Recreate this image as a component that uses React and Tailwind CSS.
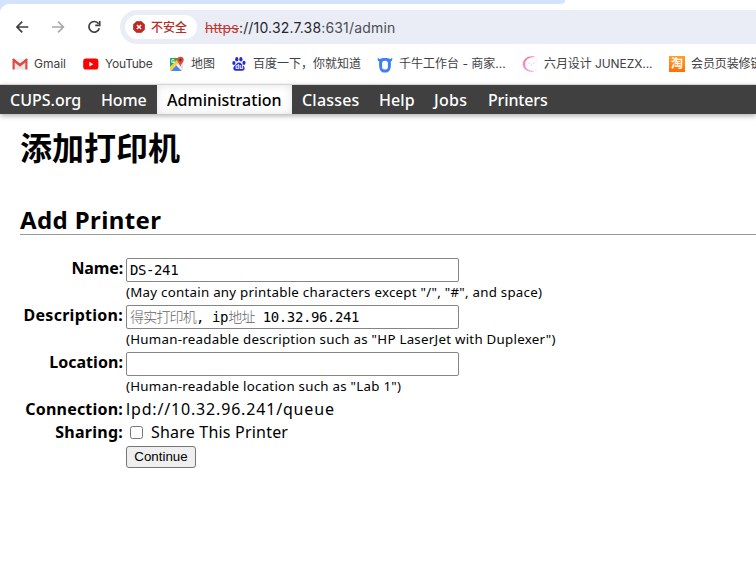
import React from "react";

const cjk = "font-['Inter','Noto_Sans_CJK_SC',sans-serif]";

function GmailIcon() {
  return (
    <svg width="16" height="16" viewBox="0 0 16 16">
      <path d="M1.2 3h13.6v10.5H1.2z" fill="#e8e6e6" />
      <path d="M0.5 3.2 8 9l7.5-5.8v10.3h-2.2V6.6L8 10.8 2.7 6.6v6.9H.5z" fill="#df4d42" />
      <path d="M.5 3.8C.5 2.6 1.6 2.2 2.5 2.9L8 7.2l5.5-4.3c.9-.7 2-.3 2 .9L8 9.4z" fill="#d9453b" />
      <path d="M2.7 3.2h10.6L8 7.2z" fill="#f4f2f2" />
    </svg>
  );
}

function YouTubeIcon() {
  return (
    <svg width="16" height="16" viewBox="0 0 16 16">
      <rect x="0.2" y="2.6" width="15.2" height="11" rx="2.8" fill="#f00" />
      <path d="M6.3 5.8v4.8l4-2.4z" fill="#fff" />
    </svg>
  );
}

function MapsIcon() {
  return (
    <svg width="16" height="16" viewBox="0 0 16 16">
      <rect x="1" y="2" width="13" height="13" rx="1.2" fill="#dfe3e8" />
      <path d="M2 2h8L1 11V3a1 1 0 0 1 1-1z" fill="#2da455" />
      <path d="M1 11.5 10.5 2l2 1.5L1.8 15 1 14z" fill="#fbcd32" />
      <path d="M2 15l5.2-5.4L12.5 15z" fill="#4386f5" />
      <path d="M8 8.6l6 6" stroke="#fff" strokeWidth="1" />
      <text x="2.1" y="7.2" fontSize="5.5" fontWeight="700" fill="#fff" fontFamily="Roboto">G</text>
      <path d="M11.4 0.7a3.3 3.3 0 0 1 3.3 3.3c0 2.4-2.6 3.2-3.1 6.5h-.4C10.700 7.200 8.100 6.400 8.100 4A3.300 3.300 0 0 1 11.400.7z" fill="#de4b3d" />
      <circle cx="11.400" cy="4" r="1.200" fill="#7d2720" />
    </svg>
  );
}

function BaiduIcon() {
  return (
    <svg width="14" height="16" viewBox="0 0 14 16" fill="#2529d8">
      <ellipse cx="1.900" cy="7" rx="1.600" ry="2.100" />
      <ellipse cx="4.800" cy="3.300" rx="1.600" ry="2.200" />
      <ellipse cx="8.900" cy="3.300" rx="1.600" ry="2.200" />
      <ellipse cx="12" cy="6.800" rx="1.600" ry="2.100" />
      <path d="M7 6.400c1.900 0 2.500 1.700 4.100 3 1.300 1.100 1.900 2.400 1.400 3.800-.6 1.700-2.200 1.700-5.500 1.600-3.300.1-4.900.1-5.500-1.600-.5-1.400.1-2.700 1.400-3.800C4.500 8.100 5.100 6.400 7 6.400z" />
      <text x="3.300" y="13.400" fontSize="6.500" fontWeight="700" fill="#fff" fontFamily="Liberation Sans">du</text>
    </svg>
  );
}

function QianniuIcon() {
  return (
    <svg width="16" height="17" viewBox="0 0 16 17">
      <path d="M1 1c0 1.200.6 1.800 1.800 1.900C4.200 2.200 6 2 8 2s3.800.2 5.200.9C14.400 2.800 15 2.200 15 1c.7 2.600.3 4.100-1.300 4.800.3 1.100.3 2.200.2 3.400-.2 4.700-1.900 7.400-5.900 7.400s-5.700-2.700-5.900-7.400c-.1-1.200-.1-2.300.2-3.400C.7 5.100.3 3.600 1 1z" fill="#3d7ff5" />
      <rect x="5.100" y="4.800" width="5.800" height="8.800" rx="2.500" fill="#fff" />
    </svg>
  );
}

function MoonIcon() {
  return (
    <svg width="16" height="16" viewBox="0 0 16 16">
      <defs>
        <linearGradient id="moon" x1="0" y1="0" x2="0" y2="1">
          <stop offset="0" stopColor="#f4738f" />
          <stop offset="1" stopColor="#f3a5f0" />
        </linearGradient>
      </defs>
      <path d="M12.500.7C5.800-.5.900 3.200.9 8.200c0 4.700 4.700 8.500 11.200 7.200C6.400 15 3 12.300 3 8.100 3 4 6.500 1.100 12.500.7z" fill="url(#moon)" stroke="url(#moon)" strokeWidth=".3" />
      <path d="M12.800 1.400c1 .8 1.700 1.800 2 3M12.800 14.600c.9-.7 1.500-1.500 1.900-2.400" stroke="#f8d5ea" strokeWidth=".7" fill="none" />
      <path d="M6.500 7.200h1.600M10.800 7.200h1.600M8.800 9h1.200" stroke="#f3b6d5" strokeWidth=".8" />
    </svg>
  );
}

function Bookmark({ icon, className, children }) {
  return (
    <div className={`flex items-center whitespace-nowrap shrink-0 ${className}`}>
      {icon}
      {children}
    </div>
  );
}

function Browser() {
  return (
    <header className={`h-[84px] shrink-0 bg-white text-[#3f4144] ${cjk}`}>
      <div className="h-1 w-[565px] rounded-br-lg bg-[#d3e3fd]" />
      <div className="relative flex h-[46px] items-center">
        <svg className="absolute left-0 top-0" width="9" height="9" viewBox="0 0 9 9">
          <path d="M0 0h9a9 9 0 0 0-9 9z" fill="#d3e3fd" />
        </svg>
        <div className="flex h-full w-[120px] items-center pl-4">
          <svg width="88" height="20" viewBox="0 0 88 20" fill="none" strokeWidth="1.700">
            <path d="M12.300 10H1M6.200 4.700.9 10l5.300 5.300" stroke="#3c3e42" />
            <path d="M36 10h11.300M42.100 4.700 47.400 10l-5.300 5.300" stroke="#a8a9ab" />
            <path d="M82.500 6.700A5.300 5.300 0 1 0 83.300 11.300" stroke="#3c3e42" />
            <path d="M83.700 4v4.300h-4.400" stroke="#3c3e42" />
          </svg>
        </div>
        <div className="flex h-[34px] flex-1 items-center rounded-l-full bg-[#eaedf6] pl-[5px]">
          <div className="flex h-6 w-[72px] items-center rounded-full bg-white pl-2">
            <svg width="12" height="12" viewBox="0 0 12 12">
              <path d="M3.600.2h4.800l3.400 3.400v4.800l-3.400 3.400H3.600L.2 8.400V3.600z" fill="#bd2a23" stroke="#bd2a23" strokeLinejoin="round" strokeWidth=".4" />
              <path d="M3.900 3.900l4.200 4.200M8.100 3.900 3.900 8.100" stroke="#fff" strokeWidth="1.400" />
            </svg>
            <span className="ml-[6px] pt-px text-[12px] font-medium leading-6 text-[#b92c25]">不安全</span>
          </div>
          <div className="ml-2 whitespace-nowrap pt-px text-[14px] leading-6 tracking-[0.17px] text-[#4b4e53]">
            <span className="text-[#c03a33] line-through">https</span>
            <span className="text-[#25272b]">://10.32.7.38</span>:631/admin
          </div>
        </div>
      </div>
      <div className="flex h-7 items-center overflow-hidden pl-3 text-[12px]">
        <Bookmark icon={<GmailIcon />} className="w-[71px] gap-[6px]">Gmail</Bookmark>
        <Bookmark icon={<YouTubeIcon />} className="w-[86px] gap-[6px] tracking-[-0.25px]">YouTube</Bookmark>
        <Bookmark icon={<MapsIcon />} className="w-[63px] gap-[6px]">地图</Bookmark>
        <Bookmark icon={<BaiduIcon />} className="w-[145px] gap-[7px]">百度一下，你就知道</Bookmark>
        <Bookmark icon={<QianniuIcon />} className="w-[145px] gap-[6px]">千牛工作台 - 商家...</Bookmark>
        <Bookmark icon={<MoonIcon />} className="w-[147px] gap-[6px] tracking-[-0.08px]">六月设计 JUNEZX...</Bookmark>
        <Bookmark
          icon={<span className="flex size-4 items-center justify-center bg-gradient-to-b from-[#ffa11f] to-[#ff6f00] text-[12px] font-bold leading-4 text-white">淘</span>}
          className="gap-[6px] tracking-[-0.1px]"
        >
          会员页装修链
        </Bookmark>
      </div>
    </header>
  );
}

const tabs = [
  { label: "CUPS.org", style: "w-[91px] tracking-[0px]" },
  { label: "Home", style: "w-[66px] tracking-[-0.1px]" },
  { label: "Administration", active: true, style: "w-[135px] tracking-[0.05px]" },
  { label: "Classes", style: "w-[77px] tracking-[0.2px]" },
  { label: "Help", style: "w-[55px] tracking-[0.1px]" },
  { label: "Jobs", style: "w-[54px] tracking-[0.3px]" },
  { label: "Printers", style: "w-[80px] tracking-[-0.15px]" },
];

function Nav() {
  return (
    <nav className="flex h-[30px] shrink-0 border-t border-[#d5d5d5] bg-[#404040] text-[16px] font-medium leading-[30px] text-white shadow-[0_2px_5px_rgba(0,0,0,0.3)]">
      {tabs.map((t) => (
        <a
          key={t.label}
          className={`whitespace-nowrap pl-[10px] ${t.style} ${t.active ? "bg-white text-black shadow-[inset_0_0_8px_rgba(0,0,0,0.12)]" : ""}`}
        >
          {t.label}
        </a>
      ))}
    </nav>
  );
}

function Row({ label, labelStyle, className, children }) {
  return (
    <div className={`flex ${className}`}>
      <div className={`w-[123px] shrink-0 whitespace-nowrap text-right font-bold leading-5 ${labelStyle}`}>{label}</div>
      <div className="ml-[3px] min-w-0 flex-1">{children}</div>
    </div>
  );
}

function Field({ value, hint, hintStyle }) {
  return (
    <>
      <div className="flex h-6 w-[333px] items-center whitespace-pre rounded-[2px] border border-[#858585] bg-white pl-[3px] font-['DejaVu_Sans_Mono','Noto_Sans_CJK_SC',monospace] text-[14px] tracking-[-0.4px]">
        {value}
      </div>
      <div className={`h-[23px] whitespace-nowrap text-[13.3px] leading-[21px] ${hintStyle}`}>{hint}</div>
    </>
  );
}

export default function App() {
  return (
    <div className="flex h-[575px] w-[756px] flex-col overflow-hidden bg-white font-['Noto_Sans','Noto_Sans_CJK_SC',sans-serif] text-black">
      <Browser />
      <Nav />
      <main className="flex-1">
        <h1 className="ml-5 mt-[10px] h-12 text-[32px] font-bold leading-[48px]">添加打印机</h1>
        <h2 className="ml-5 mt-[33px] h-[30px] border-b border-[#999] text-[24px] font-bold leading-[30px] tracking-[0.4px]">Add Printer</h2>
        <form className="mt-[23px] text-[16px]">
          <Row label="Name:" labelStyle="tracking-[-0.15px]" className="h-[47px]">
            <Field value="DS-241" hint={'(May contain any printable characters except "/", "#", and space)'} hintStyle="tracking-[0.26px]" />
          </Row>
          <Row label="Description:" labelStyle="tracking-[0.27px]" className="h-[47px]">
            <Field
              value={<><span className="font-light tracking-[-0.8px] text-[#666]">得实打印机</span>, ip<span className="font-light tracking-[-0.7px] text-[#666]">地址</span> 10.32.96.241</>}
              hint={'(Human-readable description such as "HP LaserJet with Duplexer")'}
              hintStyle="tracking-[0.26px]"
            />
          </Row>
          <Row label="Location:" labelStyle="tracking-[0.05px]" className="h-[47px]">
            <Field value="" hint={'(Human-readable location such as "Lab 1")'} hintStyle="tracking-[0.26px]" />
          </Row>
          <Row label="Connection:" labelStyle="tracking-[0.2px]" className="h-[23px]">
            <div className="leading-5 tracking-[0.83px]">lpd://10.32.96.241/queue</div>
          </Row>
          <Row label="Sharing:" labelStyle="tracking-[0.25px]" className="h-[24px]">
            <div className="flex h-5 items-center leading-5 tracking-[0.2px]">
              <span className="ml-1 mr-2 size-[13px] rounded-[2.5px] border border-[#767676] bg-white" />
              Share This Printer
            </div>
          </Row>
          <div className="ml-[126px] flex h-[22px] w-[70px] items-center justify-center rounded-[3px] border border-[#767676] bg-[#efefef] font-['Liberation_Sans',Arial,sans-serif] text-[13.333px]">
            Continue
          </div>
        </form>
      </main>
    </div>
  );
}
